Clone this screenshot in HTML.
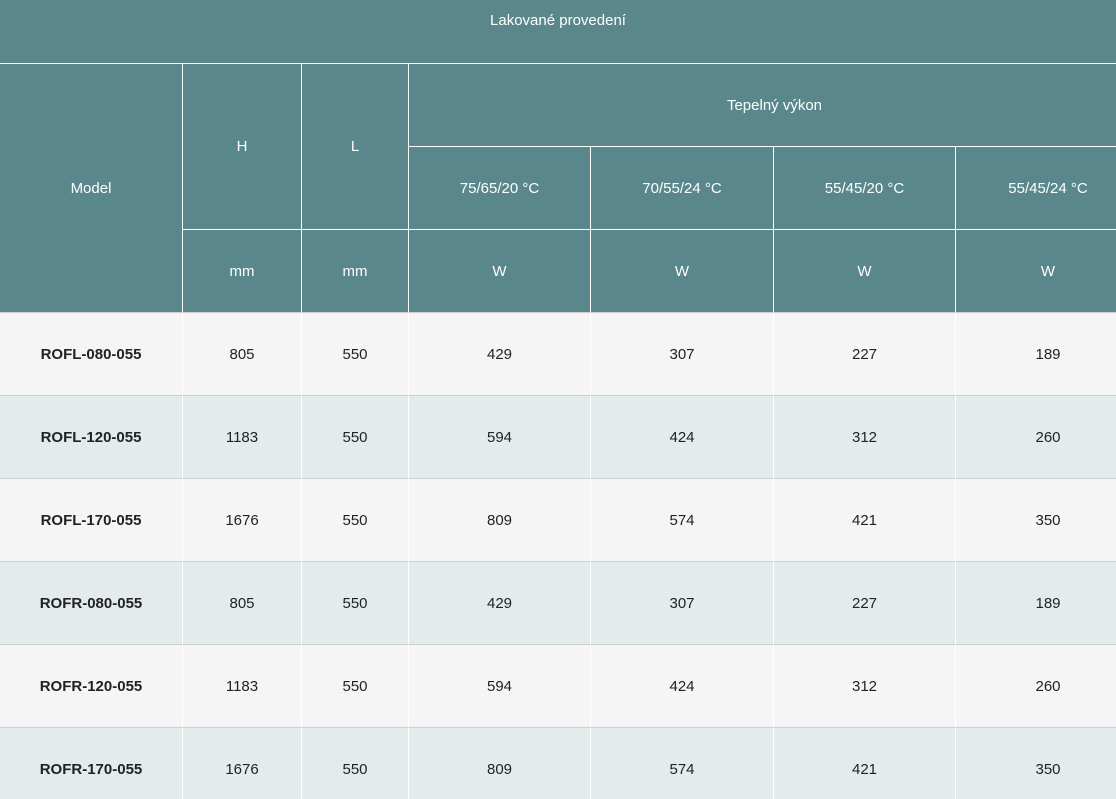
<!DOCTYPE html>
<html><head><meta charset="utf-8"><style>
html,body{margin:0;padding:0;width:1116px;height:799px;overflow:hidden;background:#f5f5f5;font-family:"Liberation Sans",Arial,sans-serif;}
.w{position:relative;width:1140px;height:799px;}
.c{position:absolute;display:flex;align-items:center;justify-content:center;font-size:15px;box-sizing:border-box;}
.h{background:#5a878b;color:#fff;}
.d{color:#222;}
.b{font-weight:bold;}
.L{border-left:1px solid #fff;}
.T{border-top:1px solid #fff;}
.G{border-top:1px solid #cfcfcf;}
.e{background:#e3ebec;}
</style></head><body><div class="w">
<div class="c h" style="left:0;top:0;width:1140px;height:63px"></div>
<div class="c h" style="left:0;top:0;width:1116px;height:63px;align-items:flex-start;padding-top:12px">Lakované provedení</div>
<div class="c h T" style="left:0;top:63px;width:182px;height:249px">Model</div>
<div class="c h T L" style="left:182px;top:63px;width:119px;height:166px">H</div>
<div class="c h T L" style="left:301px;top:63px;width:107px;height:166px">L</div>
<div class="c h T L" style="left:408px;top:63px;width:732px;height:83px">Tepelný výkon</div>
<div class="c h T L" style="left:408px;top:146px;width:182px;height:83px">75/65/20 °C</div>
<div class="c h T L" style="left:590px;top:146px;width:183px;height:83px">70/55/24 °C</div>
<div class="c h T L" style="left:773px;top:146px;width:182px;height:83px">55/45/20 °C</div>
<div class="c h T L" style="left:955px;top:146px;width:185px;height:83px">55/45/24 °C</div>
<div class="c h T L" style="left:182px;top:229px;width:119px;height:83px">mm</div>
<div class="c h T L" style="left:301px;top:229px;width:107px;height:83px">mm</div>
<div class="c h T L" style="left:408px;top:229px;width:182px;height:83px">W</div>
<div class="c h T L" style="left:590px;top:229px;width:183px;height:83px">W</div>
<div class="c h T L" style="left:773px;top:229px;width:182px;height:83px">W</div>
<div class="c h T L" style="left:955px;top:229px;width:185px;height:83px">W</div>

<div class="c d b G" style="left:0;top:312px;width:182px;height:83px">ROFL-080-055</div>
<div class="c d G L" style="left:182px;top:312px;width:119px;height:83px">805</div>
<div class="c d G L" style="left:301px;top:312px;width:107px;height:83px">550</div>
<div class="c d G L" style="left:408px;top:312px;width:182px;height:83px">429</div>
<div class="c d G L" style="left:590px;top:312px;width:183px;height:83px">307</div>
<div class="c d G L" style="left:773px;top:312px;width:182px;height:83px">227</div>
<div class="c d G L" style="left:955px;top:312px;width:185px;height:83px">189</div>

<div class="c d b G e" style="left:0;top:395px;width:182px;height:83px">ROFL-120-055</div>
<div class="c d G L e" style="left:182px;top:395px;width:119px;height:83px">1183</div>
<div class="c d G L e" style="left:301px;top:395px;width:107px;height:83px">550</div>
<div class="c d G L e" style="left:408px;top:395px;width:182px;height:83px">594</div>
<div class="c d G L e" style="left:590px;top:395px;width:183px;height:83px">424</div>
<div class="c d G L e" style="left:773px;top:395px;width:182px;height:83px">312</div>
<div class="c d G L e" style="left:955px;top:395px;width:185px;height:83px">260</div>

<div class="c d b G" style="left:0;top:478px;width:182px;height:83px">ROFL-170-055</div>
<div class="c d G L" style="left:182px;top:478px;width:119px;height:83px">1676</div>
<div class="c d G L" style="left:301px;top:478px;width:107px;height:83px">550</div>
<div class="c d G L" style="left:408px;top:478px;width:182px;height:83px">809</div>
<div class="c d G L" style="left:590px;top:478px;width:183px;height:83px">574</div>
<div class="c d G L" style="left:773px;top:478px;width:182px;height:83px">421</div>
<div class="c d G L" style="left:955px;top:478px;width:185px;height:83px">350</div>

<div class="c d b G e" style="left:0;top:561px;width:182px;height:83px">ROFR-080-055</div>
<div class="c d G L e" style="left:182px;top:561px;width:119px;height:83px">805</div>
<div class="c d G L e" style="left:301px;top:561px;width:107px;height:83px">550</div>
<div class="c d G L e" style="left:408px;top:561px;width:182px;height:83px">429</div>
<div class="c d G L e" style="left:590px;top:561px;width:183px;height:83px">307</div>
<div class="c d G L e" style="left:773px;top:561px;width:182px;height:83px">227</div>
<div class="c d G L e" style="left:955px;top:561px;width:185px;height:83px">189</div>

<div class="c d b G" style="left:0;top:644px;width:182px;height:83px">ROFR-120-055</div>
<div class="c d G L" style="left:182px;top:644px;width:119px;height:83px">1183</div>
<div class="c d G L" style="left:301px;top:644px;width:107px;height:83px">550</div>
<div class="c d G L" style="left:408px;top:644px;width:182px;height:83px">594</div>
<div class="c d G L" style="left:590px;top:644px;width:183px;height:83px">424</div>
<div class="c d G L" style="left:773px;top:644px;width:182px;height:83px">312</div>
<div class="c d G L" style="left:955px;top:644px;width:185px;height:83px">260</div>

<div class="c d b G e" style="left:0;top:727px;width:182px;height:83px">ROFR-170-055</div>
<div class="c d G L e" style="left:182px;top:727px;width:119px;height:83px">1676</div>
<div class="c d G L e" style="left:301px;top:727px;width:107px;height:83px">550</div>
<div class="c d G L e" style="left:408px;top:727px;width:182px;height:83px">809</div>
<div class="c d G L e" style="left:590px;top:727px;width:183px;height:83px">574</div>
<div class="c d G L e" style="left:773px;top:727px;width:182px;height:83px">421</div>
<div class="c d G L e" style="left:955px;top:727px;width:185px;height:83px">350</div>
</div></body></html>
